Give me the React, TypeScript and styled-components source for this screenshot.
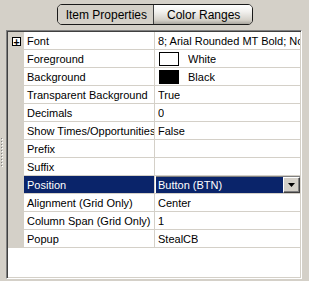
import React from 'react';
import styled, { createGlobalStyle } from 'styled-components';

const GlobalStyle = createGlobalStyle`
  html, body {
    margin: 0;
    padding: 0;
    background: #d4d0c8;
  }
  body {
    font-family: 'Liberation Sans', Arial, sans-serif;
    font-size: 11px;
    color: #000;
  }
`;

interface Row {
  label: string;
  value?: string;
  swatch?: string;
  expandable?: boolean;
  selected?: boolean;
}

const rows: Row[] = [
  { label: 'Font', value: '8; Arial Rounded MT Bold; Normal', expandable: true },
  { label: 'Foreground', value: 'White', swatch: '#ffffff' },
  { label: 'Background', value: 'Black', swatch: '#000000' },
  { label: 'Transparent Background', value: 'True' },
  { label: 'Decimals', value: '0' },
  { label: 'Show Times/Opportunities', value: 'False' },
  { label: 'Prefix' },
  { label: 'Suffix' },
  { label: 'Position', value: 'Button (BTN)', selected: true },
  { label: 'Alignment (Grid Only)', value: 'Center' },
  { label: 'Column Span (Grid Only)', value: '1' },
  { label: 'Popup', value: 'StealCB' },
];

function PropertyGrid() {
  return (
    <Page>
      <TabBar>
        <TabGroup>
          <Tab active>Item Properties</Tab>
          <Tab>Color Ranges</Tab>
        </TabGroup>
      </TabBar>

      <Body>
        <GripColumn>
          <svg width='5' height='29' viewBox='0 0 5 29'>
            {Array.from({ length: 10 }).map((_, i) => (
              <g key={i}>
                <rect x='1' y={i * 3} width='1' height='1' fill='#808080' />
                <rect x='2' y={i * 3 + 1} width='1' height='1' fill='#ffffff' />
              </g>
            ))}
          </svg>
        </GripColumn>

        <GridFrame>
          {rows.map((row) => (
            <GridRow key={row.label}>
              <Gutter>{row.expandable && <Expander>+</Expander>}</Gutter>
              <LabelCell selected={row.selected}>{row.label}</LabelCell>
              <ValueCell>
                {row.selected ? (
                  <Dropdown>
                    <DropdownText>{row.value}</DropdownText>
                    <DropdownButton>
                      <svg width='7' height='4' viewBox='0 0 7 4'>
                        <path d='M0 0h7L3.5 4z' fill='#000' />
                      </svg>
                    </DropdownButton>
                  </Dropdown>
                ) : (
                  <>
                    {row.swatch && <Swatch color={row.swatch} />}
                    <ValueText>{row.value}</ValueText>
                  </>
                )}
              </ValueCell>
            </GridRow>
          ))}
        </GridFrame>
      </Body>
    </Page>
  );
}

const Page = styled.div`
  width: 309px;
  height: 281px;
  display: flex;
  flex-direction: column;
  overflow: hidden;
`;

const TabBar = styled.div`
  display: flex;
  justify-content: center;
  padding: 4px 0 0 1px;
  height: 26px;
  box-sizing: border-box;
`;

const TabGroup = styled.div`
  display: flex;
  height: 21px;
  border: 1px solid #1a1a1a;
  border-radius: 5px;
  overflow: hidden;
  box-sizing: border-box;
`;

const Tab = styled.div<{ active?: boolean }>`
  display: flex;
  align-items: center;
  font-size: 12px;
  padding: 0 ${(p) => (p.active ? '6px 0 8px' : '12px 0 13px')};
  background: ${(p) =>
    p.active
      ? '#d4d0c8'
      : 'linear-gradient(to bottom, #ffffff 0%, #f2f1ee 35%, #d4d0c8 80%, #a8a59e 100%)'};
  border-left: ${(p) => (p.active ? 'none' : '1px solid #404040')};
  color: #000;
`;

const Body = styled.div`
  display: flex;
  margin-top: 4px;
  height: 249px;
`;

const GripColumn = styled.div`
  width: 6px;
  display: flex;
  align-items: center;
  padding-bottom: 4px;
  box-sizing: border-box;
`;

const GridFrame = styled.div`
  width: 296px;
  height: 249px;
  box-sizing: border-box;
  background: #fff;
  border-top: 1px solid #808080;
  border-left: 1px solid #808080;
  border-right: 1px solid #ffffff;
  border-bottom: 1px solid #ffffff;
  box-shadow: inset 1px 1px 0 #404040, inset -1px -1px 0 #d4d0c8;
  padding: 1px;
  display: flex;
  flex-direction: column;
`;

const GridRow = styled.div`
  display: flex;
  height: 18px;
  flex-shrink: 0;
`;

const Gutter = styled.div`
  width: 16px;
  background: #d4d0c8;
  display: flex;
  align-items: center;
  padding-left: 4px;
  box-sizing: border-box;
`;

const Expander = styled.div`
  width: 9px;
  height: 9px;
  box-sizing: border-box;
  border: 1px solid #000;
  background: #fff;
  display: flex;
  align-items: center;
  justify-content: center;
  font-family: 'DejaVu Sans Mono', monospace;
  font-size: 10px;
  line-height: 7px;
  font-weight: bold;
`;

const LabelCell = styled.div<{ selected?: boolean }>`
  width: 131px;
  box-sizing: border-box;
  padding-left: 3px;
  display: flex;
  align-items: center;
  white-space: nowrap;
  overflow: hidden;
  border-right: 1px solid #d4d0c8;
  border-bottom: 1px solid #d4d0c8;
  background: ${(p) => (p.selected ? '#0a246a' : '#fff')};
  color: ${(p) => (p.selected ? '#fff' : '#000')};
`;

const ValueCell = styled.div`
  flex: 1;
  min-width: 0;
  display: flex;
  align-items: center;
  white-space: nowrap;
  overflow: hidden;
  border-bottom: 1px solid #d4d0c8;
  padding-left: 3px;
  box-sizing: border-box;
`;

const ValueText = styled.span`
  overflow: hidden;
`;

const Swatch = styled.div<{ color: string }>`
  width: 20px;
  height: 14px;
  box-sizing: border-box;
  border: 1px solid #000;
  background: ${(p) => p.color};
  margin: 0 9px 0 1px;
`;

const Dropdown = styled.div`
  display: flex;
  align-self: stretch;
  flex: 1;
  margin-left: -2px;
  border-top: 1px solid #808080;
`;

const DropdownText = styled.div`
  flex: 1;
  background: #0a246a;
  color: #fff;
  display: flex;
  align-items: center;
  padding-left: 2px;
`;

const DropdownButton = styled.div`
  width: 17px;
  box-sizing: border-box;
  background: #d4d0c8;
  border-top: 1px solid #fff;
  border-left: 1px solid #fff;
  border-right: 1px solid #404040;
  border-bottom: 1px solid #404040;
  box-shadow: inset -1px -1px 0 #808080;
  display: flex;
  align-items: center;
  justify-content: center;
`;

export default function App() {
  return (
    <>
      <GlobalStyle />
      <PropertyGrid />
    </>
  );
}
